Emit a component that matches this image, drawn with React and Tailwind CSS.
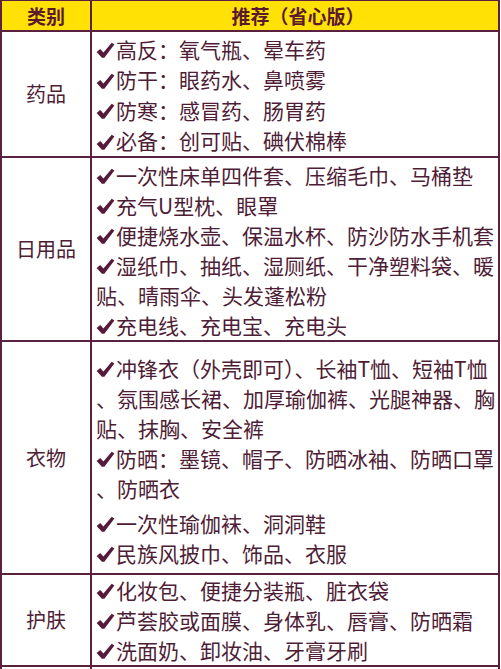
function Check() {
  return (
    <svg width="19" height="17" viewBox="0 0 20 18" className="shrink-0 mr-[1px] mt-[3px]">
      <path d="M0.6 10.6 L4.4 7.4 L7.8 11 L16.6 0.8 L19.4 2.6 L8.8 16.6 L6.2 16.8 Z" fill="#561a3a" />
    </svg>
  );
}

const rows = [
  {
    cat: "药品",
    h: "h-[30.5px]",
    pad: "pt-[2px] pb-0",
    lines: [
      ["✔", "高反：氧气瓶、晕车药"],
      ["✔", "防干：眼药水、鼻喷雾"],
      ["✔", "防寒：感冒药、肠胃药"],
      ["✔", "必备：创可贴、碘伏棉棒"],
    ],
  },
  {
    cat: "日用品",
    h: "h-[30px]",
    pad: "pt-[2px] pb-0",
    lines: [
      ["✔", "一次性床单四件套、压缩毛巾、马桶垫"],
      ["✔", "充气U型枕、眼罩"],
      ["✔", "便捷烧水壶、保温水杯、防沙防水手机套"],
      ["✔", "湿纸巾、抽纸、湿厕纸、干净塑料袋、暖"],
      ["", "贴、晴雨伞、头发蓬松粉"],
      ["✔", "充电线、充电宝、充电头"],
    ],
  },
  {
    cat: "衣物",
    h: "h-[30px]",
    pad: "pt-[11px] pb-[5px]",
    lines: [
      ["✔", "冲锋衣（外壳即可）、长袖T恤、短袖T恤"],
      ["", "、氛围感长裙、加厚瑜伽裤、光腿神器、胸"],
      ["", "贴、抹胸、安全裤"],
      ["✔", "防晒：墨镜、帽子、防晒冰袖、防晒口罩"],
      ["", "、防晒衣", "mb-[5px]"],
      ["✔", "一次性瑜伽袜、洞洞鞋"],
      ["✔", "民族风披巾、饰品、衣服"],
    ],
  },
  {
    cat: "护肤",
    h: "h-[30px]",
    pad: "pt-0 pb-0",
    lines: [
      ["✔", "化妆包、便捷分装瓶、脏衣袋"],
      ["✔", "芦荟胶或面膜、身体乳、唇膏、防晒霜"],
      ["✔", "洗面奶、卸妆油、牙膏牙刷"],
    ],
  },
];

export default function App() {
  return (
    <div
      className="w-[501px] h-[669px] overflow-hidden bg-white text-[#4e1d36]"
      style={{ fontFamily: '"Noto Sans CJK SC", "Noto Sans", sans-serif' }}
    >
      <div className="w-[500px] border-l-2 border-r-2 border-t border-[#5a2040]">
        <div className="flex h-[31px] bg-[#ffe106] border-b-2 border-[#5a2040] text-[19px] font-bold text-[#5a1a2c] leading-[29px]">
          <div className="w-[90px] shrink-0 border-r-2 border-[#5a2040] text-center">类别</div>
          <div className="flex-1 text-center pl-[6px]">推荐（省心版）</div>
        </div>
        {rows.map((r) => (
          <div key={r.cat} className="flex border-b-2 border-[#5a2040]">
            <div className="w-[90px] shrink-0 border-r-2 border-[#5a2040] flex items-center justify-center text-[20px]">
              {r.cat}
            </div>
            <div className={`flex-1 pl-[4px] text-[21px] leading-none ${r.pad}`}>
              {r.lines.map(([c, t, extra], i) => (
                <div key={i} className={`flex items-center whitespace-nowrap ${r.h} ${extra || ""}`}>
                  {c === "✔" ? <Check /> : null}
                  <span>{t}</span>
                </div>
              ))}
            </div>
          </div>
        ))}
        <div className="flex h-[20px]">
          <div className="w-[90px] shrink-0 border-r-2 border-[#5a2040]"></div>
          <div className="flex-1"></div>
        </div>
      </div>
    </div>
  );
}
